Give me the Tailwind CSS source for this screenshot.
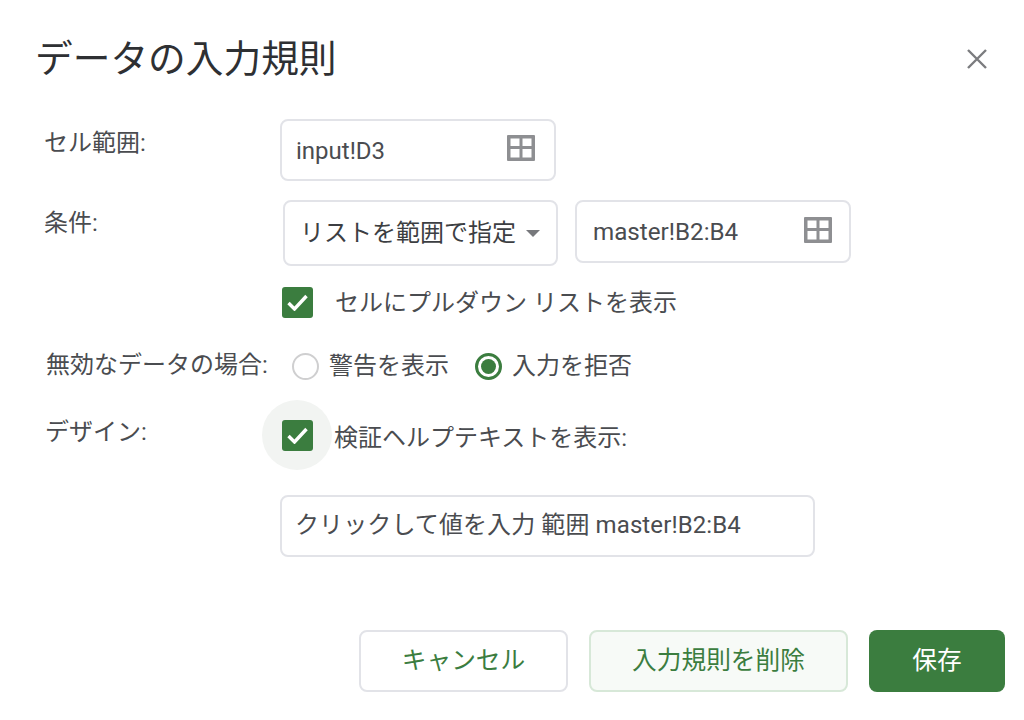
<!DOCTYPE html>
<html lang="ja">
<head>
    <meta charset="UTF-8">
    <title>データの入力規則</title>
    <script src="https://cdn.jsdelivr.net/npm/@tailwindcss/browser@4"></script>
</head>
<body class="bg-white w-[1024px] h-[720px] overflow-hidden text-[#4a4c50] font-['Roboto','Noto_Sans_CJK_JP',sans-serif]">
    <div class="flex flex-col h-full">
        <!-- header -->
        <div class="flex items-center justify-between pl-[35px] pr-[37px] h-[119px] pb-[1px]">
            <h1 class="text-[37.700px] leading-[44px] font-normal text-[#2e3033]">データの入力規則</h1>
            <svg class="w-[20px] h-[20px]" viewBox="0 0 20 20" fill="none" stroke="#7b7c7f" stroke-width="2.400"><path d="M1 1 L19 19 M19 1 L1 19"/></svg>
        </div>

        <!-- cell range -->
        <div class="flex h-[62px] pl-[44px]">
            <div class="w-[236px] text-[24px] leading-[48px]">セル範囲:</div>
            <div class="w-[276px] h-[62px] flex items-center justify-between pl-[14px] pr-[19px] border-2 border-[#e2e3e8] rounded-[8px] text-[24px]">
                <span class="mt-[1px]">input!D3</span>
                <svg class="w-[28px] h-[26px] -mt-[4px]" viewBox="0 0 28 26" fill="#8e8f92"><path fill-rule="evenodd" d="M1 0h26a1 1 0 0 1 1 1v24a1 1 0 0 1-1 1H1a1 1 0 0 1-1-1V1a1 1 0 0 1 1-1zM3.500 3.500v7.500h9V3.500zM15.500 3.500v7.500h9V3.500zM3.500 14v8.500h9V14zM15.500 14v8.500h9V14z"/></svg>
            </div>
        </div>

        <!-- condition -->
        <div class="flex h-[66px] mt-[19px] pl-[44px]">
            <div class="w-[239px] text-[24px] leading-[47px]">条件:</div>
            <div class="w-[275px] h-[66px] flex items-center justify-between pl-[15px] pr-[16px] border-2 border-[#e2e3e8] rounded-[8px] text-[24px] text-[#3c3e42]">
                <span class="whitespace-nowrap">リストを範囲で指定</span>
                <svg class="w-[14px] h-[7px] shrink-0" viewBox="0 0 14 7" fill="#77787c"><path d="M0 0h14L7 7z"/></svg>
            </div>
            <div class="w-[276px] h-[63px] ml-[17px] flex items-center justify-between pl-[16px] pr-[17px] border-2 border-[#e2e3e8] rounded-[8px] text-[24.200px]">
                <span class="mt-[1px]">master!B2:B4</span>
                <svg class="w-[28px] h-[26px] -mt-[4px]" viewBox="0 0 28 26" fill="#8e8f92"><path fill-rule="evenodd" d="M1 0h26a1 1 0 0 1 1 1v24a1 1 0 0 1-1 1H1a1 1 0 0 1-1-1V1a1 1 0 0 1 1-1zM3.500 3.500v7.500h9V3.500zM15.500 3.500v7.500h9V3.500zM3.500 14v8.500h9V14zM15.500 14v8.500h9V14z"/></svg>
            </div>
        </div>

        <!-- dropdown checkbox -->
        <div class="flex items-center h-[31px] mt-[21px] pl-[282px] gap-[22px]">
            <div class="w-[31px] h-[31px] rounded-[3px] bg-[#3b7d3f] flex items-center justify-center">
                <svg class="w-[21px] h-[17px]" viewBox="0 0 21 17" fill="none" stroke="#fff" stroke-width="3.400"><path d="M1.500 9 L7.500 15 L19.500 2"/></svg>
            </div>
            <span class="text-[24px] leading-[33px] whitespace-nowrap mt-[2px]">セルにプルダウン リストを表示</span>
        </div>

        <!-- invalid data -->
        <div class="flex items-center h-[36px] mt-[30px] pl-[46px]">
            <span class="w-[246px] text-[24px] whitespace-nowrap -mt-[3px]">無効なデータの場合:</span>
            <span class="w-[27px] h-[27px] rounded-full border-2 border-[#cfcfd0] bg-white shrink-0"></span>
            <span class="ml-[10px] text-[24px] whitespace-nowrap">警告を表示</span>
            <span class="ml-[26px] w-[27px] h-[27px] rounded-full border-[3px] border-[#3b7d3f] flex items-center justify-center shrink-0">
                <span class="w-[15px] h-[15px] rounded-full bg-[#3b7d3f]"></span>
            </span>
            <span class="ml-[10px] text-[24px] whitespace-nowrap">入力を拒否</span>
        </div>

        <!-- design -->
        <div class="flex h-[70px] mt-[16px] pl-[45px]">
            <div class="w-[217px] text-[24px] leading-[64px]">デザイン:</div>
            <div class="w-[70px] h-[70px] rounded-full bg-[#f2f4f2] flex items-center justify-center shrink-0">
                <div class="w-[31px] h-[31px] rounded-[3px] bg-[#3b7d3f] flex items-center justify-center">
                    <svg class="w-[21px] h-[17px]" viewBox="0 0 21 17" fill="none" stroke="#fff" stroke-width="3.400"><path d="M1.500 9 L7.500 15 L19.500 2"/></svg>
                </div>
            </div>
            <span class="ml-[2px] text-[24px] leading-[76px] whitespace-nowrap">検証ヘルプテキストを表示:</span>
        </div>

        <!-- help text -->
        <div class="pl-[280px] mt-[25px]">
            <div class="w-[535px] h-[62px] flex items-center pl-[13px] border-2 border-[#e2e3e8] rounded-[8px] text-[24px] whitespace-nowrap">
                <span class="-mt-[3px] tracking-[0.100px]">クリックして値を入力 範囲 master!B2:B4</span>
            </div>
        </div>

        <!-- footer -->
        <div class="flex justify-end gap-[21px] mt-[73px] pr-[19px]">
            <div class="w-[209px] h-[62px] flex items-center justify-center border-2 border-[#e2e3e8] rounded-[8px] bg-white text-[#3b7d3f] text-[24.700px]">キャンセル</div>
            <div class="w-[259px] h-[62px] flex items-center justify-center border-2 border-[#d7e8d8] rounded-[8px] bg-[#f7faf7] text-[#3b7d3f] text-[24.700px]">入力規則を削除</div>
            <div class="w-[136px] h-[62px] flex items-center justify-center rounded-[8px] bg-[#3b7d3f] text-white text-[24.700px]">保存</div>
        </div>
    </div>
</body>
</html>
